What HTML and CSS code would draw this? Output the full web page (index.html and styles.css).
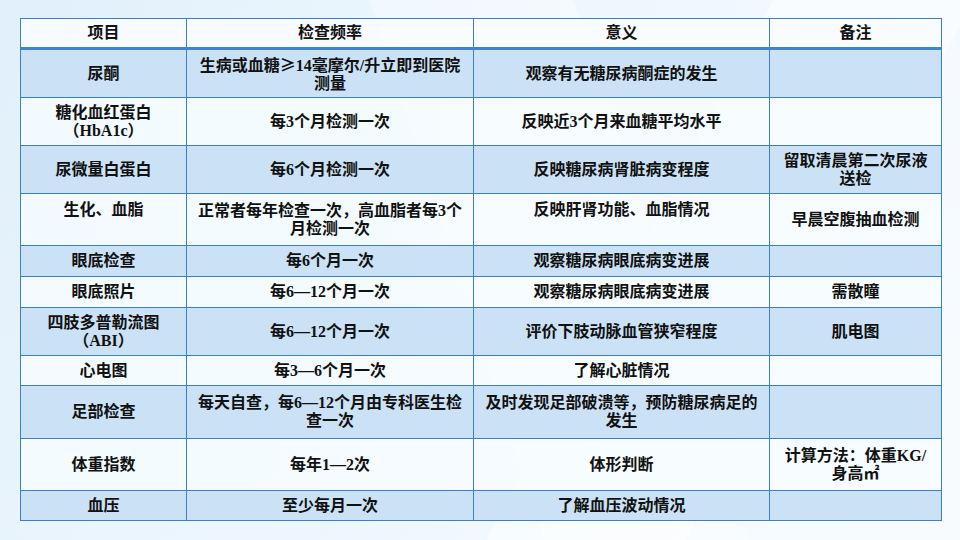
FILE: index.html
```html
<!DOCTYPE html>
<html lang="zh-CN">
<head>
<meta charset="utf-8">
<title>糖尿病检查项目</title>
<link rel="stylesheet" href="styles.css">
</head>
<body>
<div class="slide">
  <table class="exam">
    <colgroup>
      <col class="c1"><col class="c2"><col class="c3"><col class="c4">
    </colgroup>
    <thead>
      <tr class="head">
        <th>项目</th><th>检查频率</th><th>意义</th><th>备注</th>
      </tr>
    </thead>
    <tbody>
      <tr class="blue r49">
        <td>尿酮</td>
        <td>生病或血糖<span class="cjk">≥</span>14毫摩尔/升立即到医院<br>测量</td>
        <td>观察有无糖尿病酮症的发生</td>
        <td></td>
      </tr>
      <tr class="light r48">
        <td>糖化血红蛋白<br>（HbA1c）</td>
        <td>每3个月检测一次</td>
        <td>反映近3个月来血糖平均水平</td>
        <td></td>
      </tr>
      <tr class="blue r48">
        <td>尿微量白蛋白</td>
        <td>每6个月检测一次</td>
        <td>反映糖尿病肾脏病变程度</td>
        <td>留取清晨第二次尿液送检</td>
      </tr>
      <tr class="light r52">
        <td class="top">生化、血脂</td>
        <td>正常者每年检查一次，高血脂者每3个月检测一次</td>
        <td class="top">反映肝肾功能、血脂情况</td>
        <td>早晨空腹抽血检测</td>
      </tr>
      <tr class="blue r31">
        <td>眼底检查</td>
        <td>每6个月一次</td>
        <td>观察糖尿病眼底病变进展</td>
        <td></td>
      </tr>
      <tr class="light r31">
        <td>眼底照片</td>
        <td>每6—12个月一次</td>
        <td>观察糖尿病眼底病变进展</td>
        <td>需散瞳</td>
      </tr>
      <tr class="blue r48">
        <td>四肢多普勒流图<br>（ABI）</td>
        <td>每6—12个月一次</td>
        <td>评价下肢动脉血管狭窄程度</td>
        <td>肌电图</td>
      </tr>
      <tr class="light r30">
        <td>心电图</td>
        <td>每3—6个月一次</td>
        <td>了解心脏情况</td>
        <td></td>
      </tr>
      <tr class="blue r53">
        <td>足部检查</td>
        <td>每天自查，每6—12个月由专科医生检查一次</td>
        <td>及时发现足部破溃等，预防糖尿病足的发生</td>
        <td></td>
      </tr>
      <tr class="light r52">
        <td>体重指数</td>
        <td>每年1—2次</td>
        <td>体形判断</td>
        <td>计算方法：体重KG/<br>身高㎡</td>
      </tr>
      <tr class="blue r30">
        <td>血压</td>
        <td>至少每月一次</td>
        <td>了解血压波动情况</td>
        <td></td>
      </tr>
    </tbody>
  </table>
</div>
</body>
</html>
```

FILE: styles.css
```css
html, body {
  margin: 0;
  padding: 0;
}

body {
  width: 960px;
  height: 540px;
  overflow: hidden;
  font-family: "Liberation Serif", "Noto Sans CJK SC", serif;
  color: #111;
}

.slide {
  width: 960px;
  height: 540px;
  box-sizing: border-box;
  padding: 18px 19px 0 20px;
  background:
    linear-gradient(118deg, transparent 62%, rgba(255,255,255,0.45) 62%, rgba(255,255,255,0.45) 78%, transparent 78%),
    linear-gradient(72deg, transparent 48%, rgba(255,255,255,0.35) 48%, rgba(255,255,255,0.35) 66%, transparent 66%),
    linear-gradient(160deg, rgba(255,255,255,0.0) 0%, rgba(255,255,255,0.4) 100%),
    linear-gradient(90deg, #e1f0fb 0%, #e9f5fd 45%, #f3f9fe 100%);
}

.exam {
  width: 921px;
  table-layout: fixed;
  border-collapse: collapse;
  font-size: 16px;
  line-height: 18px;
  font-weight: 700;
}

.c1 { width: 166px; }
.c2 { width: 287px; }
.c3 { width: 296px; }
.c4 { width: 172px; }

.exam th,
.exam td {
  border: 1px solid #3c80c4;
  text-align: center;
  vertical-align: middle;
  padding: 0 6px;
  font-weight: 700;
}

.cjk {
  font-family: "Noto Sans CJK SC", sans-serif;
}

.exam td.top {
  vertical-align: top;
  padding-top: 7px;
}

.head {
  height: 30px;
  background: rgba(248, 252, 255, 0.9);
}

.head th {
  border-bottom: 3px solid #3c84d0;
}

.blue { background: #cbe2f6; }
.light { background: rgba(246, 251, 255, 0.85); }

.r30 { height: 30px; }
.r31 { height: 31px; }
.r48 { height: 48px; }
.r49 { height: 49px; }
.r52 { height: 52px; }
.r53 { height: 53px; }
```
